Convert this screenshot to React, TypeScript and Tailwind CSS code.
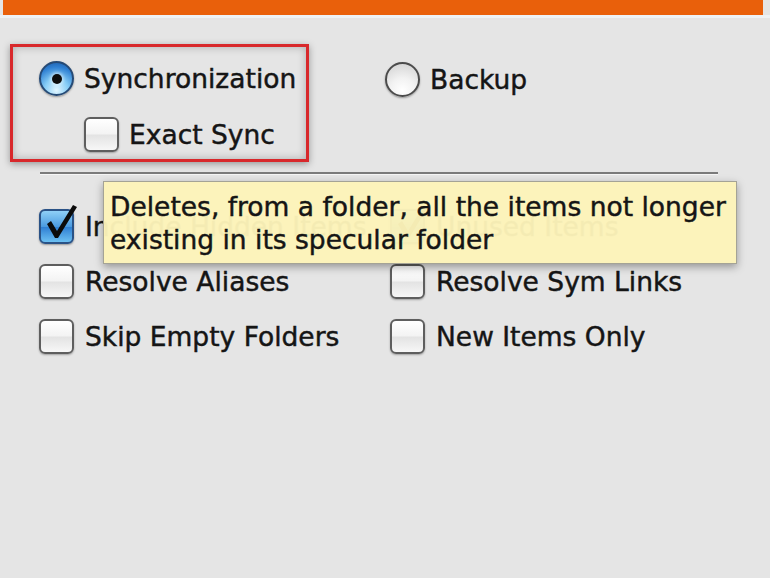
import React from 'react';

function Radio({ checked }: { checked?: boolean }) {
  if (checked) {
    return (
      <span className="relative flex h-[35px] w-[35px] shrink-0 items-center justify-center rounded-full border-2 border-[#264a75] bg-[radial-gradient(circle_at_50%_88%,#e2f6ff_0%,#86cdf6_38%,#2f80d2_74%,#1b56a0_100%)] shadow-[0_1px_2px_rgba(0,0,0,0.35)]">
        <span className="h-[10px] w-[10px] rounded-full bg-[#0d0d0d] shadow-[0_0_3px_2px_rgba(255,255,255,0.45)]" />
      </span>
    );
  }
  return (
    <span className="h-[35px] w-[35px] shrink-0 rounded-full border-2 border-[#4b4b4b] bg-[radial-gradient(circle_at_50%_85%,#ffffff_0%,#f2f2f2_40%,#cfcfcf_100%)] shadow-[0_1px_2px_rgba(0,0,0,0.35)]" />
  );
}

function Checkbox({ checked }: { checked?: boolean }) {
  if (checked) {
    return (
      <span className="relative h-[35px] w-[35px] shrink-0 rounded-[6px] border-2 border-[#2a5286] bg-[linear-gradient(to_bottom,#8fd0f7_0%,#4b9be0_50%,#2f7fd3_52%,#6cc0f2_100%)] shadow-[0_1px_2px_rgba(0,0,0,0.35)]">
        <svg className="absolute left-[3px] top-[-7px] overflow-visible" width="36" height="38" viewBox="0 0 36 38">
          <path d="M3 20 L7 17 L13 27 L29 1 L33 3 L14 34 L11 34 Z" fill="#0b0b0b" />
        </svg>
      </span>
    );
  }
  return (
    <span className="h-[35px] w-[35px] shrink-0 rounded-[6px] border-2 border-[#5e5e5e] bg-[linear-gradient(to_bottom,#ffffff_0%,#f3f3f3_48%,#e3e3e3_52%,#f7f7f7_100%)] shadow-[0_1px_2px_rgba(0,0,0,0.3)]" />
  );
}

function Option({ label, checked, gap = 'gap-[11px]' }: { label: string; checked?: boolean; gap?: string }) {
  return (
    <div className={`flex h-[35px] items-center ${gap}`}>
      <Checkbox checked={checked} />
      <span className="whitespace-nowrap">{label}</span>
    </div>
  );
}

export default function App() {
  return (
    <div className="relative h-[578px] w-[770px] overflow-hidden bg-[#e5e5e5] font-['DejaVu_Sans',sans-serif] text-[26.5px] text-[#151515] [-webkit-text-stroke:0.45px_#151515]">
      <div className="ml-[3px] mr-[7px] h-[15px] bg-[#e9600b]" />
      <div className="h-[3px] bg-[#eef2f5]" />

      <div className="flex pl-[10px] pt-[26px]">
        <div className="flex h-[118px] w-[299px] flex-col border-[3px] border-[#d8282b] pl-[26px] pt-[14px] shadow-[0_2px_7px_rgba(0,0,0,0.35),inset_0_0_8px_rgba(0,0,0,0.25)]">
          <div className="flex h-[35px] items-center gap-[10px]">
            <Radio checked />
            <span className="whitespace-nowrap">Synchronization</span>
          </div>
          <div className="mt-[21px] pl-[45px]">
            <Option label="Exact Sync" gap="gap-[10px]" />
          </div>
        </div>
        <div className="ml-[76px] mt-[18px] flex h-[35px] items-center gap-[10px]">
          <Radio />
          <span>Backup</span>
        </div>
      </div>

      <div className="ml-[40px] mt-[10px] w-[678px]">
        <div className="h-[2px] bg-[#7b7b7b]" />
        <div className="h-px bg-[#f6f6f6]" />
      </div>

      <div className="grid grid-cols-[351px_1fr] gap-y-[20px] pl-[39px] pt-[34px]">
        <Option label="Include Hidden Items" checked />
        <Option label="Unused Items" checked />
        <Option label="Resolve Aliases" />
        <Option label="Resolve Sym Links" />
        <Option label="Skip Empty Folders" />
        <Option label="New Items Only" />
      </div>

      {/* tooltip over the first option row */}
      <div className="absolute left-[103px] top-[181px] h-[83px] w-[634px] border border-[#a4a396] bg-[#fcf3b9]/[0.97] px-[6px] pt-[8px] leading-[33px] shadow-[0_3px_8px_rgba(0,0,0,0.35)]">
        <div>Deletes, from a folder, all the items not longer</div>
        <div>existing in its specular folder</div>
      </div>
    </div>
  );
}
